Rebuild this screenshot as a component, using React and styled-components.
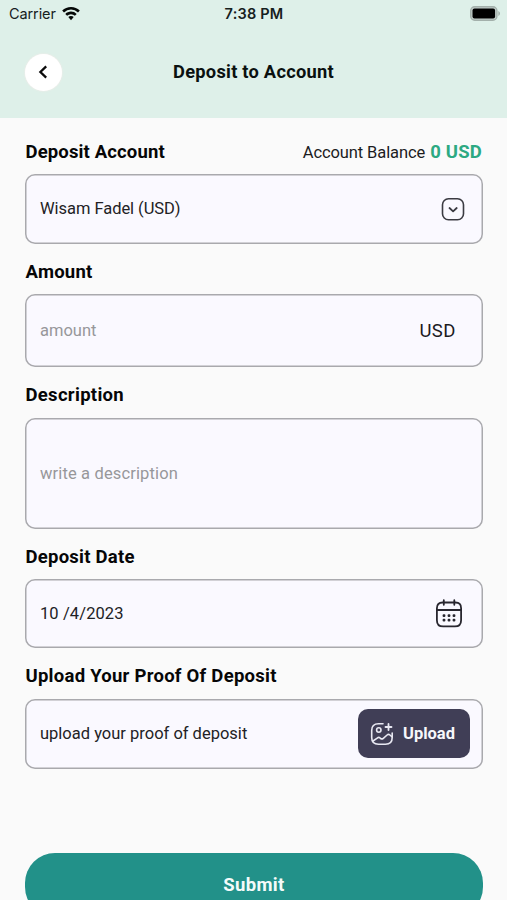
import React, { useState } from 'react';
import styled, { createGlobalStyle } from 'styled-components';

const GlobalStyle = createGlobalStyle`
  * {
    box-sizing: border-box;
  }

  body {
    margin: 0;
    background-color: #fafafa;
    font-family: Roboto, 'Liberation Sans', sans-serif;
  }
`;

const Screen = styled.div`
  width: 507px;
  height: 900px;
  overflow: hidden;
  background-color: #fafafa;
`;

const Header = styled.header`
  height: 118px;
  background-color: #def0e9;
`;

const StatusBar = styled.div`
  display: grid;
  grid-template-columns: 1fr auto 1fr;
  align-items: center;
  height: 27px;
  padding: 0 6px 0 9px;
  font-family: Inter, sans-serif;
  color: #16201d;
`;

const Carrier = styled.div`
  display: flex;
  align-items: center;
  gap: 6px;
  font-size: 14.5px;
  letter-spacing: -0.1px;
`;

const Time = styled.div`
  padding-right: 2px;
  font-size: 14.5px;
  font-weight: 600;
  letter-spacing: 0.2px;
`;

const Battery = styled.svg`
  justify-self: end;
`;

const TitleBar = styled.div`
  display: grid;
  grid-template-columns: 38px 1fr 38px;
  align-items: center;
  height: 90px;
  padding: 0 25px;
`;

const BackButton = styled.button`
  display: flex;
  align-items: center;
  justify-content: center;
  width: 37px;
  height: 37px;
  padding: 0 1px 0 0;
  border: none;
  border-radius: 50%;
  background-color: #ffffff;
  box-shadow: 0 0 2px rgba(255, 235, 235, 0.9);
`;

const Title = styled.h1`
  margin: 0;
  padding-bottom: 2px;
  font-size: 18.3px;
  font-weight: 700;
  letter-spacing: ${(props) => props.$tracking || 0}px;
  text-align: center;
  color: #0a1110;
`;

const Form = styled.form`
  display: flex;
  flex-direction: column;
  padding: 0 24px 0 25px;
`;

const LabelRow = styled.div`
  display: flex;
  align-items: center;
  justify-content: space-between;
  height: ${(props) => props.$height || 51}px;
  padding: ${(props) => props.$top || 5}px 1px 0 0.5px;
`;

const Label = styled.label`
  font-size: 18.5px;
  font-weight: 700;
  letter-spacing: ${(props) => props.$tracking || 0.24}px;
  color: #060607;
`;

const Balance = styled.div`
  display: flex;
  align-items: baseline;
  gap: 5px;
  font-size: 16.5px;
  letter-spacing: -0.1px;
  color: #1c1c1e;
`;

const BalanceValue = styled.span`
  font-size: 18.5px;
  font-weight: 700;
  letter-spacing: 0.2px;
  color: #2ca982;
`;

const Field = styled.div`
  display: flex;
  align-items: center;
  justify-content: space-between;
  height: ${(props) => props.$height}px;
  padding: 0 ${(props) => props.$right || 18}px 0 15px;
  border-radius: 10px;
  background-color: #faf9ff;
  box-shadow: inset 0 0 0 1.5px #a9a9ad;
`;

const FieldText = styled.span`
  padding-bottom: ${(props) => props.$lift || 0}px;
  font-size: 16.5px;
  letter-spacing: ${(props) => props.$tracking || 0}px;
  color: ${(props) => (props.$muted ? '#97979a' : '#222225')};
`;

const Currency = styled.span`
  padding-right: 9px;
  font-size: 18.5px;
  letter-spacing: 0.5px;
  color: #1c1c1f;
`;

const UploadButton = styled.button`
  display: flex;
  align-items: center;
  gap: 9px;
  width: 112px;
  height: 49px;
  margin-bottom: 1px;
  padding: 0 0 0 12px;
  border: none;
  border-radius: 10px;
  background-color: #403e56;
  font-family: inherit;
  font-size: 16.5px;
  font-weight: 700;
  color: #f7f7fb;
`;

const SubmitButton = styled.button`
  height: 64px;
  margin-top: 84px;
  padding: 0;
  border: none;
  border-radius: 30px;
  background-color: #229189;
  font-family: inherit;
  font-size: 18.5px;
  font-weight: 700;
  letter-spacing: 0.35px;
  color: #f4fbfa;
`;

const WifiIcon = () => (
  <svg width="18" height="14" viewBox="0 0 18 14" fill="#050807">
    <path d="M9 0C5.6 0 2.5 1.3.2 3.500L2 5.400a10 10 0 0 1 14 0L17.800 3.500A12.700 12.700 0 0 0 9 0Z" />
    <path d="M9 4.600c-2.200 0-4.200.9-5.700 2.300l1.800 1.900a5.600 5.600 0 0 1 7.800 0l1.800-1.900A8.200 8.200 0 0 0 9 4.600Z" />
    <path d="M9 9.100c-1.100 0-2 .4-2.700 1L9 13.300l2.700-3.200c-.7-.6-1.600-1-2.700-1Z" />
  </svg>
);

const BatteryIcon = () => (
  <Battery width="31" height="15" viewBox="0 0 31 15">
    <rect x="0.7" y="0.7" width="26.200" height="13.600" rx="4" fill="#c3ceca" stroke="#a3b0ab" strokeWidth="1.400" />
    <rect x="2.500" y="2.500" width="22.600" height="10" rx="2" fill="#000" />
    <path d="M28.300 5v5c1-.4 1.700-1.400 1.700-2.500S29.300 5.400 28.300 5Z" fill="#a3b0ab" />
  </Battery>
);

const BackIcon = () => (
  <svg width="10" height="14" viewBox="0 0 10 14" fill="none">
    <path d="M8.200 1.400 2.400 7l5.800 5.600" stroke="#0b0b0b" strokeWidth="2.300" />
  </svg>
);

const DropdownIcon = () => (
  <svg width="24" height="24" viewBox="0 0 24 24" fill="none" stroke="#3b3b42" strokeLinecap="round" strokeLinejoin="round">
    <rect x="1.500" y="1.700" width="21" height="21" rx="6" strokeWidth="1.600" />
    <path d="m8.500 11 3.600 3.300 3.600-3.300" strokeWidth="1.800" />
  </svg>
);

const CalendarIcon = () => (
  <svg width="28" height="30" viewBox="0 0 28 30" fill="none" stroke="#28272f" strokeWidth="1.800" strokeLinecap="round">
    <path d="M7.500 3.500c-3.600 0-5.600 2-5.600 5.700v12c0 4 2 6.200 6.200 6.200h11.800c4.200 0 6.200-2.200 6.200-6.200v-12c0-3.700-2-5.700-5.600-5.700H7.500" />
    <path d="M8.800 1.200v4.600M19.300 1.200v4.600M2 11h24" />
    <g fill="#28272f" stroke="none">
      {[9, 14, 19].map((x) => (
        <React.Fragment key={x}>
          <rect x={x - 1.4} y="15.200" width="2.800" height="2.800" rx="1" />
          <rect x={x - 1.4} y="19.700" width="2.800" height="2.800" rx="1" />
        </React.Fragment>
      ))}
    </g>
  </svg>
);

const ImageAddIcon = () => (
  <svg width="24" height="24" viewBox="0 0 24 24" fill="none" stroke="#e8e8f2" strokeWidth="1.600" strokeLinecap="round" strokeLinejoin="round">
    <path d="M13 1.800H8.500C4 1.800 1.700 4 1.700 8.500v7c0 4.500 2.300 6.700 6.800 6.700h7c4.500 0 6.700-2.200 6.700-6.700V11" />
    <circle cx="8.800" cy="8" r="2.200" />
    <path d="M18.500 2v6M15.500 5h6" strokeWidth="1.800" />
    <path d="m3 19 4.600-3.200c.8-.5 1.800-.4 2.500.2l.4.300c.8.700 2 .7 2.800 0l3.800-3.300c.8-.7 2-.7 2.800 0l2 1.700" />
  </svg>
);

const App = () => {
  const [balance] = useState(0);

  return (
    <Screen>
      <GlobalStyle />
      <Header>
        <StatusBar>
          <Carrier>
            Carrier
            <WifiIcon />
          </Carrier>
          <Time>7:38 PM</Time>
          <BatteryIcon />
        </StatusBar>
        <TitleBar>
          <BackButton aria-label="Back">
            <BackIcon />
          </BackButton>
          <Title $tracking={0.24}>Deposit to Account</Title>
        </TitleBar>
      </Header>
      <Form onSubmit={(e) => e.preventDefault()}>
        <LabelRow $height={56} $top={12}>
          <Label $tracking={0.14}>Deposit Account</Label>
          <Balance>
            Account Balance
            <BalanceValue>{balance} USD</BalanceValue>
          </Balance>
        </LabelRow>
        <Field $height={70}>
          <FieldText $lift={2} $tracking={-0.05}>Wisam Fadel (USD)</FieldText>
          <DropdownIcon />
        </Field>
        <LabelRow $height={50}>
          <Label>Amount</Label>
        </LabelRow>
        <Field $height={73}>
          <FieldText $muted>amount</FieldText>
          <Currency>USD</Currency>
        </Field>
        <LabelRow>
          <Label $tracking={0.3}>Description</Label>
        </LabelRow>
        <Field $height={111}>
          <FieldText $muted $lift={1} $tracking={0.14}>write a description</FieldText>
        </Field>
        <LabelRow $height={50}>
          <Label>Deposit Date</Label>
        </LabelRow>
        <Field $height={69} $right={20}>
          <FieldText $lift={1} $tracking={0.1}>10 /4/2023</FieldText>
          <CalendarIcon />
        </Field>
        <LabelRow>
          <Label $tracking={0.26}>Upload Your Proof Of Deposit</Label>
        </LabelRow>
        <Field $height={70} $right={13}>
          <FieldText $lift={2}>upload your proof of deposit</FieldText>
          <UploadButton type="button">
            <ImageAddIcon />
            Upload
          </UploadButton>
        </Field>
        <SubmitButton type="submit">Submit</SubmitButton>
      </Form>
    </Screen>
  );
};

export default App;
